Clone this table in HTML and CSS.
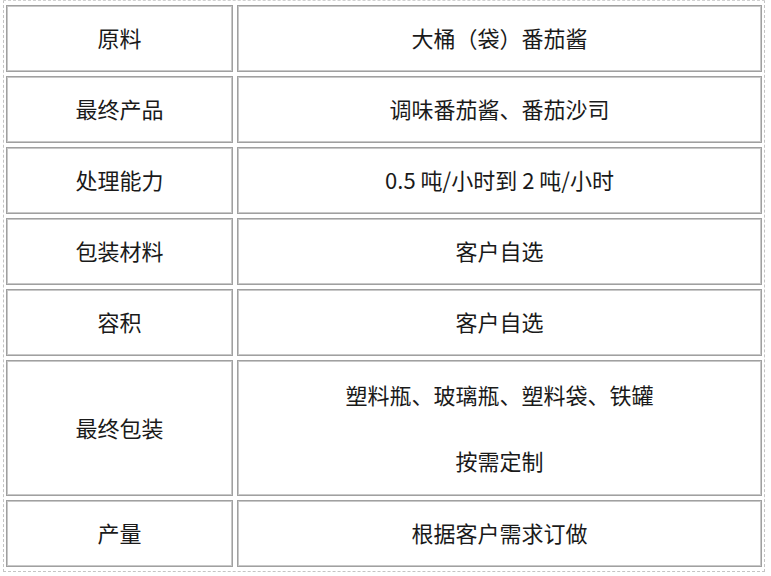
FILE: index.html
```html
<!DOCTYPE html>
<html lang="zh-CN">
<head>
<meta charset="utf-8">
<title>番茄酱生产线参数</title>
<link rel="stylesheet" href="styles.css">
</head>
<body>
<div class="spec">
  <div class="cell">原料</div>
  <div class="cell">大桶（袋）番茄酱</div>
  <div class="cell">最终产品</div>
  <div class="cell">调味番茄酱、番茄沙司</div>
  <div class="cell">处理能力</div>
  <div class="cell">0.5 吨/小时到 2 吨/小时</div>
  <div class="cell">包装材料</div>
  <div class="cell">客户自选</div>
  <div class="cell">容积</div>
  <div class="cell">客户自选</div>
  <div class="cell">最终包装</div>
  <div class="cell multi">
    <div class="line">塑料瓶、玻璃瓶、塑料袋、铁罐</div>
    <div class="line">按需定制</div>
  </div>
  <div class="cell">产量</div>
  <div class="cell">根据客户需求订做</div>
</div>
</body>
</html>
```

FILE: styles.css
```css
html, body {
  margin: 0;
  padding: 0;
  background: #ffffff;
}

body {
  font-family: "Noto Sans CJK SC", "Noto Sans", sans-serif;
  color: #1a1a1a;
}

.spec {
  display: grid;
  grid-template-columns: 227px 525px;
  grid-template-rows: 67px 67px 67px 67px 67px 136px 67px;
  gap: 4px;
  width: fit-content;
  margin-left: 3px;
  padding: 4px 2px 4px 2px;
  border: 1px dashed #c4c4c4;
  border-top-color: #d0d0d0;
}

.cell {
  box-sizing: border-box;
  display: flex;
  align-items: center;
  justify-content: center;
  padding-bottom: 3px;
  border: 1px solid #a0a0a0;
  box-shadow: inset 0 0 0 1px #c8c8c8;
  font-size: 22px;
  line-height: 1;
}

.multi {
  flex-direction: column;
}

.line {
  line-height: 66px;
}
```
